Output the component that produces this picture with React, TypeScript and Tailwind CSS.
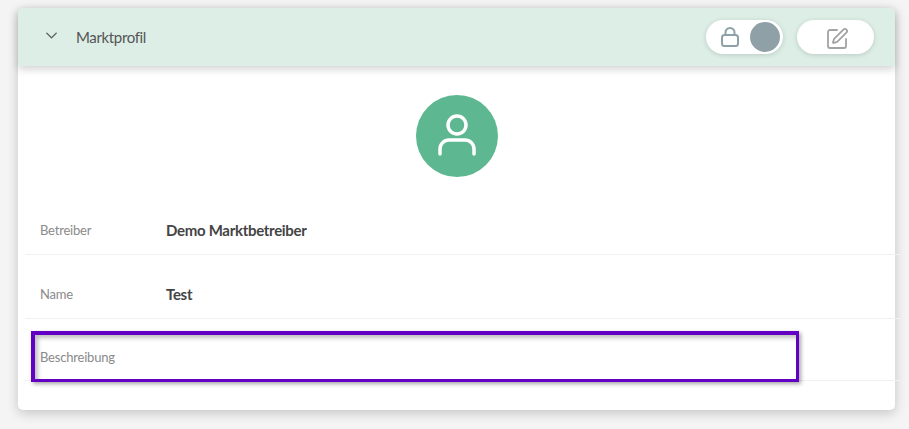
import { ChevronDown, SquarePen } from "lucide-react";

const rows = [
  { label: "Betreiber", value: "Demo Marktbetreiber", height: "h-[49px]" },
  { label: "Name", value: "Test", height: "h-[64px] pt-[15px]" },
  { label: "Beschreibung", value: "", height: "h-[62px] pt-[15px]" },
];

export default function App() {
  return (
    <div className="relative h-[429px] w-[909px] overflow-hidden bg-[#f4f4f4] pt-2 pl-[18px] font-['Lato',sans-serif]">
      <div className="h-[402px] w-[877px] rounded-[5px] bg-white shadow-[0_3px_12px_rgba(0,0,0,0.2)]">
        <div className="flex h-[58px] items-center rounded-t-[5px] bg-[#dceee6] pr-[21px] pl-6 shadow-[0_3px_8px_rgba(0,0,0,0.18)]">
          <ChevronDown size={19} strokeWidth={1.7} className="-translate-y-0.5 text-[#555b5b]" />
          <span className="ml-[15px] text-[15px] tracking-[-0.35px] text-[#555555]">Marktprofil</span>
          <div className="ml-auto flex items-center gap-[14px]">
            <div className="flex h-[34px] w-[77px] items-center justify-between rounded-full bg-white pr-[3px] pl-[15px] shadow-[0_1px_5px_rgba(0,0,0,0.15)]">
              <svg width="18" height="20" viewBox="0 0 18 20" fill="none" stroke="#8da1a7" strokeWidth="2">
                <rect x="1" y="8" width="16" height="11" rx="2.5" />
                <path d="M4.5 8V5.5a4.5 4.5 0 0 1 9 0V8" />
              </svg>
              <div className="h-[30px] w-[30px] rounded-full bg-[#8fa1a7]" />
            </div>
            <div className="flex h-[34px] w-[77px] items-center justify-center rounded-full bg-white shadow-[0_1px_5px_rgba(0,0,0,0.15)]">
              <SquarePen size={24} strokeWidth={1.8} className="translate-x-px translate-y-0.5 text-[#a3a3a3]" />
            </div>
          </div>
        </div>

        <div className="flex justify-center pt-[29px]">
          <div className="flex h-[82px] w-[82px] items-center justify-center rounded-full bg-[#5db891]">
            <svg width="40" height="44" viewBox="0 0 40 44" fill="none" stroke="white" strokeWidth="3.5" strokeLinecap="round">
              <circle cx="20" cy="11" r="9" />
              <path d="M3 40v-5a9 9 0 0 1 9-9h16a9 9 0 0 1 9 9v5" />
            </svg>
          </div>
        </div>

        <div className="mt-[29px] ml-[7px] w-[877px]">
          {rows.map((row) => (
            <div key={row.label} className={`flex items-center border-b border-[#f1f1f1] pl-[15px] ${row.height}`}>
              <span className="w-[126px] translate-y-px text-[13px] tracking-[-0.2px] text-[#8a8a8a]">{row.label}</span>
              <span className="text-[15px] font-bold tracking-[-0.3px] text-[#444444]">{row.value}</span>
            </div>
          ))}
        </div>
      </div>

      <div className="absolute top-[331px] left-[31px] h-[51px] w-[768px] border-t-4 border-r-[3px] border-b-[3px] border-l-4 border-[#6200c4] shadow-[2px_2px_4px_rgba(0,0,0,0.35),inset_3px_3px_4px_rgba(0,0,0,0.25)]" />
    </div>
  );
}
